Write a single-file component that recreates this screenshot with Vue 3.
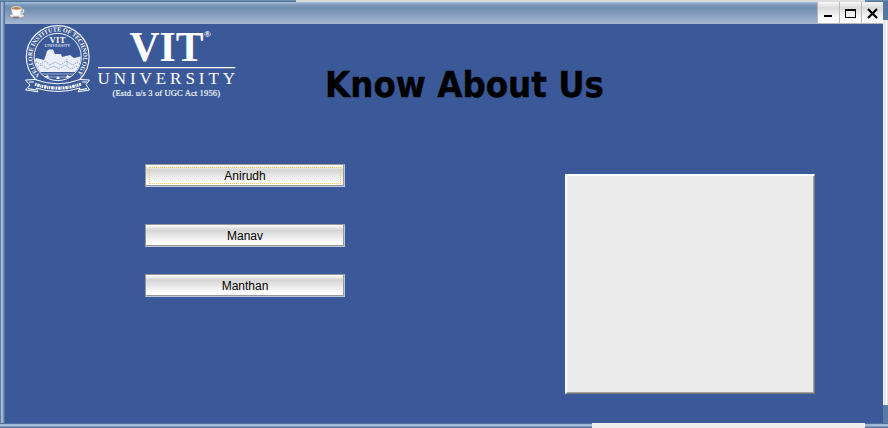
<script setup>
const members = ['Anirudh', 'Manav', 'Manthan']
</script>

<template>
  <div class="window">
    <div class="edge-top"></div>
    <div class="edge-left"></div>
    <div class="main">
      <header class="titlebar">
        <svg class="cup" width="16" height="14" viewBox="0 0 16 14">
          <ellipse cx="8" cy="10.7" rx="7.5" ry="2.4" fill="#e9e5e1" stroke="#766d6b" stroke-width=".5" />
          <path d="M2.5 3.3 Q3 10.8 6 11 H9 Q12 10.5 12.5 3.3Z" fill="#fff" stroke="#c9c3bd" stroke-width=".5" />
          <path d="M12 5 Q15.5 4 14.5 6.8 Q13.5 8.5 11.5 8" fill="none" stroke="#f4efeb" stroke-width="1.2" />
          <ellipse cx="7.5" cy="3.3" rx="5" ry="1.8" fill="#b98350" stroke="#f4eee7" stroke-width=".8" />
          <path d="M4 12.2 H10" stroke="#6d5147" />
        </svg>
        <div class="controls">
          <button aria-label="Minimize"><svg width="21" height="20"><path d="M6 15h8" stroke="#000" stroke-width="2" /></svg></button>
          <button aria-label="Maximize"><svg width="21" height="20"><path d="M5.5 8.5h10v8h-10z M5 9.5h11" fill="none" stroke="#000" shape-rendering="crispEdges" /></svg></button>
          <button aria-label="Close"><svg width="21" height="20"><path d="M6 8l9 9M15 8l-9 9" stroke="#000" stroke-width="2.2" /></svg></button>
        </div>
      </header>
      <main class="content">
        <section class="left">
          <svg class="logo" width="212" height="76" viewBox="25 24 212 76">
            <defs>
              <path id="sealArc" d="M39.9 75.2 A25.5 25.5 0 1 1 75.5 75.2" />
              <clipPath id="sealClip"><circle cx="57.7" cy="57" r="23" /></clipPath>
            </defs>
            <g fill="none" stroke="#f4f7fc">
              <circle cx="57.7" cy="57" r="31.4" stroke-width="1.2" />
              <circle cx="57.7" cy="57" r="23.6" stroke-width="1" />
            </g>
            <text class="serif bold" font-size="6.2"><textPath href="#sealArc" textLength="118" lengthAdjust="spacingAndGlyphs">VELLORE INSTITUTE OF TECHNOLOGY</textPath></text>
            <text class="serif bold" x="57.5" y="42.6" font-size="8.6" text-anchor="middle" textLength="16">VIT</text>
            <text class="serif" x="57.5" y="47.4" font-size="4.4" text-anchor="middle" textLength="26" lengthAdjust="spacingAndGlyphs">UNIVERSITY</text>
            <g clip-path="url(#sealClip)">
              <path d="M34 62 L36 58 L44 60 L45.5 56 L47 51 L49 49.5 L53 49.5 L55 54 L61 54 L62 57 L70 55 L74 58 L82 56 V72 H34Z" fill="#e9eef7" />
              <path d="M36 62l5 2 4-3 5 4 5-3 6 3 5-4 7 4 5-3M36 67l6-2 5 4 7-3 5 3 6-4 6 4 6-3M67 59v7" fill="none" stroke="#6f88b5" stroke-width=".8" stroke-dasharray="1.2 1" />
              <path d="M36 74h44M40 77h36" stroke="#b5c3dd" stroke-width=".8" />
            </g>
            <path d="M25.5 80 L35 79.5 Q58 88 80 79.5 L89.5 80 L86 84.5 L89.5 90 L78 91.8 L80 88 Q58 95 36 88 L38 91.8 L25.5 90 L30 85Z" fill="#3b5998" stroke="#fff" stroke-width="1" />
            <path d="M29 82 L34 82M82 82L87 82M28 88.6l8 1.4M79 90l8-1.4" fill="none" stroke="#fff" stroke-width="1.2" />
            <path d="M35 84.2 Q58 92 81 84.2" fill="none" stroke="#fff" stroke-width="3.2" stroke-dasharray="1.5 .8 2.5 .7 1 .6" />
            <path d="M44 77l4-2 1 3zM67 75l4 2-5 1zM56 79l2-3 2 3z" fill="#fff" />
            <text class="serif bold" x="129.5" y="61.4" font-size="43" textLength="74" lengthAdjust="spacingAndGlyphs">VIT</text>
            <text class="serif" x="204" y="36.6" font-size="9" stroke="#fff" stroke-width=".1">®</text>
            <path d="M98 67.6H235.3" stroke="#fff" stroke-width="1.1" />
            <text class="serif" x="97.5" y="84.1" font-size="17" textLength="140" lengthAdjust="spacing" letter-spacing="2.5">UNIVERSITY</text>
            <text class="serif" x="112.5" y="96" font-size="8.5" stroke="#fff" stroke-width=".15" textLength="107.5">(Estd. u/s 3 of UGC Act 1956)</text>
          </svg>
          <nav class="members">
            <button v-for="(name, i) in members" :key="name" class="member" :class="{ focused: i === 0 }"><span>{{ name }}</span></button>
          </nav>
        </section>
        <section class="right">
          <h1><svg width="300" height="44"><text x="0" y="33" textLength="279" lengthAdjust="spacingAndGlyphs">Know About Us</text></svg></h1>
          <div class="panel"></div>
        </section>
      </main>
    </div>
    <div class="edge-right"></div>
    <div class="edge-bottom"></div>
  </div>
</template>

<style>
body { margin: 0; overflow: hidden; }
</style>

<style scoped>
.window {
  width: 888px;
  height: 428px;
  display: grid;
  grid-template-columns: 5px 878px 5px;
  grid-template-rows: 2px 421px 5px;
  background: #3b5998;
}
.edge-top {
  grid-column: 1 / 4;
  background: linear-gradient(90deg, transparent 296px, #dedcda 296px 865px, transparent 865px), linear-gradient(#6e8dad 1px, #507399 1px);
}
.edge-left { background: linear-gradient(90deg, #5f7fa7 1px, #a9bdd8 1px 2px, #9cb2d0 2px 3px, #7390b7 3px 4px, #55749e 4px); }
.edge-right { background: linear-gradient(#56779f 18px, transparent 18px 403px, #587ba4 403px), linear-gradient(90deg, #f3f3f3 1px, #dedede 1px 2px, #ececec 2px 3px, #fff 3px 4px, #d8dce3 4px); }
.edge-bottom {
  grid-column: 1 / 4;
  background: linear-gradient(90deg, transparent 592px, #ededed 592px 865px, transparent 865px), linear-gradient(#51709f 1px, #9fb4cf 1px 2px, #adc0da 2px 3px, #7793b9 3px 4px, #5a7ba4 4px);
}
.main { display: flex; flex-direction: column; }
.titlebar {
  height: 22px;
  display: flex;
  justify-content: space-between;
  background: linear-gradient(#a8c1dc 0, #7c98b9 3px, #718daf 6px, #8199bb 11px, #a4b8d3 22px);
}
.cup { margin: 3px 0 0 4px; }
.controls { display: flex; height: 22px; }
button { box-sizing: border-box; margin: 0; padding: 0; }
.controls button {
  width: 22px;
  height: 22px;
  border: 1px solid #b8b8b8;
  border-width: 0 0 1px 1px;
  background: linear-gradient(#f8f8f8, #dadada 6px, #f5f5f5 14px, #fff);
}
.controls svg { display: block; margin-top: -4px; }
.content { display: flex; flex: 1; }
.left { width: 320px; }
.logo { display: block; margin-left: 20px; }
.logo text { fill: #fff; }
.serif { font-family: "Liberation Serif", serif; }
.bold { font-weight: bold; }
.members { display: flex; flex-direction: column; margin: 64px 0 0 140px; }
.member {
  width: 200px;
  height: 23px;
  padding: 2px 3px 4px;
  border: 1px solid #999;
  border-right-color: #bcc7da;
  border-bottom-color: #bcc7da;
  box-shadow: inset -1px -1px #999;
  background: linear-gradient(#fff 0, #e5e5e5 3px, #d5d5d5 5px, #e8e8e8 11px, #fff 18px);
  color: #000;
  font: 12px "Liberation Sans", sans-serif;
}
.member + .member { margin-top: 37px; }
.member:last-child { margin-top: 27px; }
.member span { display: block; box-sizing: border-box; height: 17px; border: 1px solid transparent; line-height: 17px; }
.focused span { border: 1px dotted #f2c94e; }
.right { width: 558px; }
h1 { height: 44px; margin: 40px 0 0; }
h1 svg { display: block; overflow: visible; }
h1 text { font: bold 36px "DejaVu Sans", sans-serif; fill: #000; stroke: #000; stroke-width: .4px; }
.panel {
  box-sizing: border-box;
  width: 250px;
  height: 220px;
  margin: 66px 0 0 240px;
  border: 2px solid #fff;
  border-right: 1px solid #777;
  border-bottom: 1px solid #777;
  box-shadow: inset -1px -1px #a0a0a0;
  background: #ebebeb;
}
</style>
